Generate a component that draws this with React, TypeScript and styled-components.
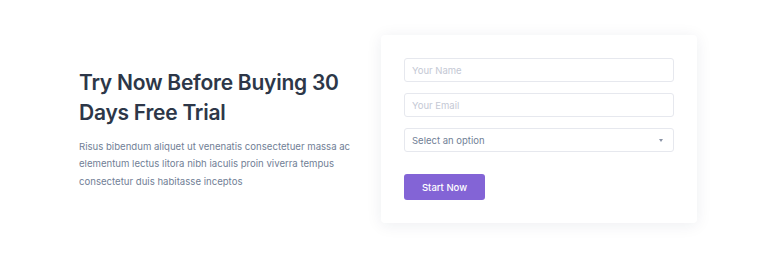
import styled, { createGlobalStyle } from 'styled-components';

const GlobalStyle = createGlobalStyle`
  body {
    margin: 0;
    background: #ffffff;
    font-family: Inter, 'Open Sans', sans-serif;
  }
`;

const Section = styled.section`
  box-sizing: border-box;
  width: 768px;
  height: 256px;
  padding-top: 2px;
  display: flex;
  align-items: center;
  justify-content: center;
`;

const Inner = styled.div`
  display: grid;
  grid-template-columns: 280px 316px;
  column-gap: 22px;
  align-items: center;
  margin-left: 8px;
`;

const Intro = styled.div`
  padding-top: 0;
`;

const Title = styled.h2`
  margin: 0 0 10px;
  font-size: 21px;
  line-height: 30px;
  font-weight: 600;
  color: #2d3748;
  letter-spacing: -0.25px;
`;

const Text = styled.p`
  margin: 0;
  font-size: 9.6px;
  line-height: 17.5px;
  color: #718096;
`;

const Card = styled.form`
  box-sizing: border-box;
  width: 316px;
  padding: 23px;
  background: #ffffff;
  border-radius: 4px;
  box-shadow: 0 2px 16px rgba(30, 40, 80, 0.08);
  display: flex;
  flex-direction: column;
  gap: 11px;
`;

const Field = styled.input`
  box-sizing: border-box;
  width: 100%;
  height: 24px;
  padding: 0 7px;
  border: 1px solid #e6e8ee;
  border-radius: 3px;
  font-family: inherit;
  font-size: 9.5px;
  color: #4a5568;
  outline: none;
  &::placeholder {
    color: #c4c8d4;
  }
`;

const SelectBox = styled.div`
  box-sizing: border-box;
  height: 24px;
  padding: 0 10px 0 7px;
  border: 1px solid #e6e8ee;
  border-radius: 3px;
  display: flex;
  align-items: center;
  justify-content: space-between;
  font-size: 9.5px;
  color: #718096;
`;

const Caret = styled.span`
  width: 0;
  height: 0;
  border-left: 2.5px solid transparent;
  border-right: 2.5px solid transparent;
  border-top: 3px solid #8a93a6;
`;

const Button = styled.button`
  margin-top: 11px;
  width: 81px;
  height: 26px;
  border: none;
  border-radius: 3px;
  background: #8364d6;
  color: #ffffff;
  font-family: inherit;
  font-size: 9.5px;
  font-weight: 500;
  cursor: pointer;
`;

function App() {
  return (
    <>
      <GlobalStyle />
      <Section>
        <Inner>
          <Intro>
            <Title>Try Now Before Buying 30 Days Free Trial</Title>
            <Text>
              Risus bibendum aliquet ut venenatis consectetuer massa ac elementum lectus litora nibh
              iaculis proin viverra tempus consectetur duis habitasse inceptos
            </Text>
          </Intro>
          <Card onSubmit={(e) => e.preventDefault()}>
            <Field placeholder="Your Name" />
            <Field placeholder="Your Email" />
            <SelectBox>
              <span>Select an option</span>
              <Caret />
            </SelectBox>
            <Button type="submit">Start Now</Button>
          </Card>
        </Inner>
      </Section>
    </>
  );
}

export default App;
